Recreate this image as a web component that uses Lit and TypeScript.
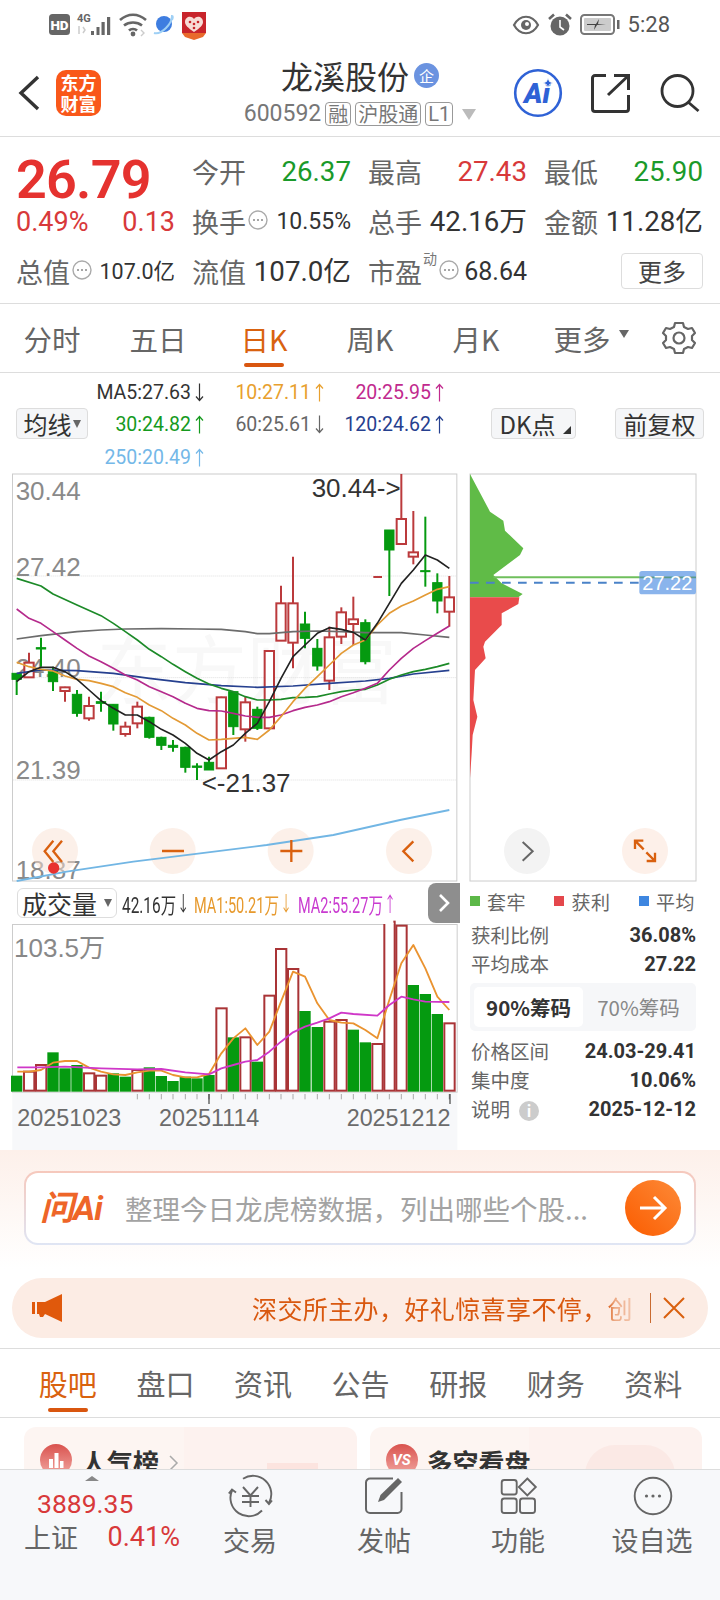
import { LitElement, html, css, svg } from "lit";
import { customElement } from "lit/decorators.js";

type P = [number, number];
const line = (p: P[]) => p.map((q) => q.join(",")).join(" ");
const XS = [50, 87, 123, 159, 195, 231, 267, 303, 340, 376, 412, 448, 484, 519, 556, 591, 627, 664, 700, 736, 772, 808, 843, 879, 915, 952, 988, 1024, 1060, 1096, 1132, 1168, 1204, 1240, 1276, 1312, 1348];
const RED = "#bb3a3c";
const GREEN = "#059a10";
// [wickTop, bodyTop, bodyBottom, wickBottom, up]
const CANDLES: [number, number, number, number, number][] = [
  [610, 610, 628, 675, 0], [548, 578, 622, 622, 1], [503, 533, 537, 590, 0], [590, 605, 635, 663, 0], [650, 652, 663, 695, 1],
  [660, 673, 730, 740, 0], [680, 708, 745, 752, 1], [665, 695, 700, 725, 0], [703, 703, 762, 782, 0], [755, 770, 792, 800, 1],
  [695, 710, 760, 775, 1], [740, 742, 802, 806, 0], [800, 802, 826, 840, 0], [810, 826, 832, 845, 0], [830, 832, 892, 908, 0],
  [880, 888, 892, 930, 0], [860, 877, 900, 900, 0], [680, 682, 895, 895, 1], [665, 665, 770, 795, 0], [680, 697, 778, 815, 1],
  [710, 718, 775, 780, 0], [543, 543, 775, 775, 1], [347, 400, 512, 512, 1], [260, 400, 518, 595, 1], [425, 462, 505, 535, 0],
  [507, 535, 588, 602, 0], [470, 502, 632, 660, 1], [412, 427, 500, 522, 1], [380, 448, 462, 525, 1], [448, 458, 575, 583, 0],
  [320, 320, 322, 322, 1], [180, 180, 240, 378, 0], [12, 147, 222, 222, 1], [123, 247, 260, 283, 1], [140, 302, 305, 350, 0],
  [310, 338, 393, 430, 0], [318, 382, 425, 470, 1],
];
const MA5: P[] = [[50,635],[87,605],[123,592],[159,592],[195,605],[231,628],[267,660],[303,692],[340,715],[376,735],[412,735],[448,755],[484,778],[519,795],[556,820],[591,850],[627,870],[664,845],[700,825],[736,790],[772,760],[808,695],[843,625],[879,560],[915,525],[952,490],[988,473],[1024,478],[1060,487],[1096,510],[1132,460],[1168,400],[1204,340],[1240,300],[1276,255],[1312,270],[1348,295]];
const MA10: P[] = [[50,577],[87,590],[123,598],[159,603],[195,618],[231,628],[267,632],[303,640],[340,650],[376,668],[412,682],[448,705],[484,722],[519,745],[556,765],[591,790],[627,810],[664,808],[700,805],[736,802],[772,808],[808,780],[843,740],[879,695],[915,655],[952,620],[988,585],[1024,550],[1060,525],[1096,510],[1132,465],[1168,430],[1204,408],[1240,393],[1276,375],[1312,358],[1348,350]];
const MA20: P[] = [[50,417],[87,445],[123,460],[159,485],[195,510],[231,535],[267,558],[303,575],[340,595],[376,615],[412,630],[448,650],[484,665],[519,680],[556,700],[591,715],[627,722],[664,723],[700,730],[736,738],[772,742],[808,742],[843,735],[879,722],[915,712],[952,705],[988,695],[1024,680],[1060,668],[1096,655],[1132,640],[1168,600],[1204,565],[1240,535],[1276,512],[1312,490],[1348,468]];
const MA30: P[] = [[50,325],[123,348],[159,372],[231,405],[303,437],[340,460],[376,485],[412,510],[448,538],[484,560],[519,583],[556,605],[591,625],[627,642],[664,655],[700,665],[736,680],[772,690],[808,690],[843,688],[879,683],[915,682],[952,680],[988,672],[1024,665],[1060,660],[1096,658],[1132,645],[1168,628],[1204,615],[1240,605],[1276,598],[1312,590],[1348,580]];
const MA60: P[] = [[50,507],[123,497],[231,485],[303,480],[376,477],[484,476],[591,477],[664,478],[736,485],[772,491],[808,491],[879,485],[952,483],[1024,485],[1096,488],[1204,488],[1276,495],[1348,502]];
const MA120: P[] = [[50,610],[123,600],[231,602],[340,610],[448,625],[556,638],[664,647],[772,652],[879,648],[988,640],[1096,633],[1168,625],[1240,612],[1348,601]];
const MA250: P[] = [[50,1233],[200,1205],[400,1175],[600,1150],[800,1125],[1000,1095],[1200,1050],[1348,1020]];
const VOL: [number, number][] = [[587,0],[575,1],[555,1],[517,0],[565,0],[555,0],[580,1],[587,1],[580,0],[590,0],[570,1],[562,0],[588,0],[603,0],[590,0],[595,0],[585,0],[385,1],[472,0],[472,1],[545,0],[347,1],[207,1],[267,1],[393,0],[441,0],[425,1],[420,1],[449,0],[487,0],[492,1],[125,1],[137,1],[315,0],[342,0],[402,0],[430,1]];
const V1: P[] = [[52,575],[87,575],[123,570],[159,548],[195,543],[231,543],[267,563],[303,575],[340,583],[376,585],[412,577],[448,572],[484,572],[519,585],[556,592],[591,592],[627,582],[664,520],[700,475],[736,445],[772,495],[808,455],[843,365],[879,275],[915,290],[952,370],[988,420],[1024,428],[1060,430],[1096,450],[1132,475],[1168,360],[1204,250],[1240,195],[1276,265],[1312,350],[1348,390]];
const V2: P[] = [[52,562],[123,562],[195,560],[303,565],[412,568],[484,567],[556,577],[627,583],[664,565],[700,555],[736,545],[772,540],[808,515],[843,485],[879,457],[915,440],[952,428],[988,415],[1024,398],[1060,402],[1132,407],[1168,375],[1204,350],[1240,358],[1276,365],[1348,366]];
const CHIP_G: P[] = [[30,12],[90,125],[130,152],[135,182],[190,235],[180,255],[100,315],[125,340],[188,372],[175,382],[30,382]];
const CHIP_R: P[] = [[30,382],[178,382],[175,402],[125,430],[125,465],[75,515],[70,530],[77,565],[45,600],[40,690],[52,740],[38,795],[35,850],[30,925]];

const dots = html`<svg class="dots" viewBox="0 0 20 20"><circle cx="10" cy="10" r="9" fill="none" stroke="#aaa" stroke-width="1.4"/><circle cx="6" cy="10" r="1" fill="#888"/><circle cx="10" cy="10" r="1" fill="#888"/><circle cx="14" cy="10" r="1" fill="#888"/></svg>`;
const up = html`<svg class="arr" viewBox="0 0 9 20"><path d="M4.5 19V2M1 6l3.5-4L8 6" fill="none" stroke="currentColor" stroke-width="1.2"/></svg>`;
const down = html`<svg class="arr" viewBox="0 0 9 20"><path d="M4.5 1v17M1 14l3.5 4L8 14" fill="none" stroke="currentColor" stroke-width="1.2"/></svg>`;

@customElement("app-root")
export class AppRoot extends LitElement {
  static styles = css`
    :host { display: block; width: 720px; height: 1600px; overflow: hidden; background: #fff; font-family: Roboto, "Noto Sans CJK SC", sans-serif; color: #333; }
    * { box-sizing: border-box; }
    svg { display: block; overflow: visible; }
    .cjk { font-family: "Noto Sans CJK SC", sans-serif; }
    .status { height: 50px; display: flex; justify-content: space-between; align-items: flex-start; padding: 10px 50px 0 49px; }
    .status-right { display: flex; align-items: center; height: 29px; }
    .st-eye { margin-right: 9px; }
    .st-alarm { margin-right: 8px; }
    .st-bat { margin-right: 9px; }
    .time { font-size: 22px; color: #555; }
    .head { height: 87px; display: grid; grid-template-columns: 1fr auto 1fr; align-items: center; border-bottom: 1px solid #ddd; }
    .head-l { display: flex; align-items: center; padding-left: 18px; gap: 16px; }
    .logo { width: 45px; height: 46px; border-radius: 10px; background: #f9581a; color: #fff; font: 700 18px/21px "Noto Sans CJK SC", sans-serif; display: flex; align-items: center; justify-content: center; text-align: center; }
    .head-c { display: flex; flex-direction: column; align-items: center; padding-top: 6px; height: 100%; }
    .title { display: flex; align-items: center; gap: 5px; font-size: 32px; line-height: 38px; color: #333; }
    .qi { width: 25px; height: 25px; border-radius: 50%; background: #6b93e0; color: #fff; font-size: 15px; line-height: 25px; text-align: center; }
    .sub { display: flex; align-items: center; gap: 3px; margin-top: 8px; color: #777; font-size: 23px; line-height: 24px; }
    .tag { border: 1px solid #999; border-radius: 4px; font-size: 20px; line-height: 22px; padding: 0 2px; color: #777; margin-left: 1px; }
    .caret { width: 0; height: 0; border: 7.5px solid transparent; border-top: 11px solid #bbb; border-bottom: 0; margin-left: 6px; }
    .head-r { display: flex; justify-content: flex-end; align-items: center; padding-right: 19px; gap: 29px; }
    .search { margin-left: 2px; }
    .quote { height: 167px; border-bottom: 1px solid #ddd; padding: 10px 0 0 16px; display: grid; grid-template-columns: 176px 176px 176px 175px; grid-template-rows: 50px 50px 50px; }
    .price { font-size: 54px; font-weight: 600; color: #e5322f; line-height: 50px; margin-top: 8px; letter-spacing: -.8px; }
    .cell { width: 159px; display: flex; align-items: center; line-height: 50px; white-space: nowrap; font-size: 27.7px; }
    .lab { font-size: 27px; color: #666; }
    .push { margin-left: auto; }
    .red { color: #d8393a; }
    .grn { color: #1a9a2a; }
    .sm { font-size: 23px; }
    .xs { font-size: 21.5px; }
    .md { font-size: 25px; }
    .cell .small { font-size: 27px; }
    .dots { width: 20px; height: 20px; margin-left: 2px; flex: none; margin-top: -4px; }
    .sup { font-size: 14px; color: #777; align-self: flex-start; line-height: 16px; margin-top: 3px; margin-left: 1px; }
    .more { width: 82px; height: 36px; border: 1px solid #ddd; border-radius: 4px; font-size: 24px; line-height: 34px; text-align: center; color: #444; margin-left: 77px; align-self: center; margin-top: -3px; }
    .tabs { height: 69px; display: grid; grid-template-columns: repeat(6, 106px) 1fr; align-items: center; border-bottom: 1px solid #ddd; margin-left: -1px; }
    .tab { position: relative; height: 100%; display: flex; align-items: center; justify-content: center; font-size: 28.5px; color: #666; }
    .tab.on { color: #d9620f; }
    .tab.on::after { content: ""; position: absolute; width: 40px; height: 4px; border-radius: 2px; background: #d9560f; bottom: 5px; left: 33px; }
    .tab-caret { position: absolute; left: 90px; top: 26px; width: 0; height: 0; border: 5px solid transparent; border-top: 8px solid #666; border-bottom: 0; }
    .gear { margin-left: 27px; }
    .ma { height: 97px; padding-top: 3px; display: grid; grid-template-columns: 83px 121px 120px 120px 1fr; grid-template-rows: 32px 33px 32px; font-size: 19.5px; }
    .mv { display: flex; justify-content: flex-end; align-items: center; white-space: nowrap; }
    .m1 { grid-area: 1 / 2; color: #333; }
    .m2 { grid-area: 1 / 3; color: #e8a02e; }
    .m3 { grid-area: 1 / 4; color: #c12a8e; }
    .m4 { grid-area: 2 / 2; color: #159a1e; }
    .m5 { grid-area: 2 / 3; color: #666; }
    .m6 { grid-area: 2 / 4; color: #26408f; }
    .m7 { grid-area: 3 / 2; color: #74b8e8; }
    .arr { width: 9px; height: 21px; margin-left: 4px; flex: none; }
    .btn { background: #f5f6f8; border: 1px solid #ddd; border-radius: 4px; color: #333; font-size: 24px; height: 31px; line-height: 29px; display: flex; align-items: center; justify-content: center; position: relative; }
    .b1 { grid-column: 1 / 3; grid-row: 2; width: 72px; margin-left: 16px; }
    .b-tri { width: 0; height: 0; border: 4.5px solid transparent; border-top: 8px solid #666; border-bottom: 0; margin-left: 1px; }
    .tools { grid-column: 5; grid-row: 2; display: flex; justify-content: flex-end; gap: 39px; padding-right: 16px; }
    .b2 { width: 85px; padding-right: 12px; }
    .b2::after { content: ""; position: absolute; right: 4px; bottom: 4px; border: 4px solid transparent; border-right-color: #333; border-bottom-color: #333; }
    .b3 { width: 89px; }
    .charts { display: flex; height: 412px; }
    .lower { display: flex; height: 268px; }
    .lower-l { width: 460px; }
    .vh { height: 42px; display: flex; align-items: center; padding-left: 17px; position: relative; }
    .b4 { width: 100px; height: 30px; font-size: 25px; border-radius: 6px; color: #333; background: #fff; flex: none; }
    .b4 .b-tri { margin-left: 7px; }
    .vi { display: flex; align-items: center; font-size: 22px; transform: scaleX(.66); transform-origin: left center; white-space: nowrap; flex: none; margin-left: 5px; }
    .vi.a { width: 67px; color: #333; transform: scaleX(.7); }
    .vi.b { width: 99px; color: #e79a2e; }
    .vi.c { width: 100px; color: #c93bd0; }
    .vi .arr { margin-left: 4px; width: 13px; }
    .fold { position: absolute; left: 428px; top: 1px; width: 32px; height: 40px; background: #8e8e8e; border-radius: 8px 0 0 8px; display: flex; align-items: center; justify-content: center; }
    .lower-r { width: 260px; padding: 7px 24px 0 10px; font-size: 19.5px; color: #666; }
    .legend { display: flex; justify-content: space-between; align-items: center; height: 24px; padding-right: 1px; font-size: 19px; }
    .lg { display: flex; align-items: center; gap: 7px; letter-spacing: .5px; }
    .sq { width: 10px; height: 10px; }
    .sq1 { background: #5cb848; }
    .sq2 { background: #e4474c; }
    .sq3 { background: #3e86e0; }
    .row { display: flex; justify-content: space-between; align-items: center; height: 29px; padding-left: 1px; }
    .row b { font-size: 20px; font-weight: 700; color: #333; font-family: Roboto, sans-serif; }
    .r1 { margin-top: 7px; }
    .seg { margin: 5px 0; height: 48px; background: #f6f7f9; border-radius: 5px; padding: 4px; display: flex; align-items: center; font-size: 20.5px; color: #888; }
    .seg span { flex: 1; text-align: center; line-height: 40px; padding-left: 2px; }
    .seg .act { flex: none; width: 109px; background: #fff; border-radius: 5px; font-weight: 700; color: #333; padding: 0; }
    .info { display: inline-block; width: 20px; height: 20px; border-radius: 50%; background: #ccc; color: #fff; text-align: center; line-height: 20px; font-size: 15px; font-weight: 700; font-style: normal; margin-left: 9px; }
    .ai { height: 199px; background: linear-gradient(#fdf0ea, #fff 60%); padding-top: 21px; border-bottom: 1px solid #ddd; }
    .ask { margin: 0 24px; height: 74px; border: 2px solid transparent; border-radius: 14px; background: linear-gradient(#fff, #fff) padding-box, linear-gradient(#f6c8bc, #dfe5f4) border-box; display: flex; align-items: center; padding: 0 13px 0 14px; }
    .ask-logo { font: italic 700 34px/36px Roboto, "Noto Sans CJK SC", sans-serif; color: #ee6528; width: 85px; flex: none; white-space: nowrap; letter-spacing: -1px; }
    .ask-t { flex: 1; font-size: 27.5px; color: #a3a3a3; white-space: nowrap; overflow: hidden; }
    .go { width: 56px; height: 56px; border-radius: 50%; background: linear-gradient(45deg, #fb5c00, #fd8a38); display: flex; align-items: center; justify-content: center; flex: none; }
    .notice { margin: 33px 12px 0; height: 60px; border-radius: 30px; background: #fcece4; display: flex; align-items: center; padding-left: 20px; color: #d9580f; }
    .notice-t { margin-left: 188px; width: 386px; font-size: 25px; letter-spacing: .4px; white-space: nowrap; overflow: hidden; -webkit-mask-image: linear-gradient(90deg, #000 92%, rgba(0,0,0,.45) 94%, rgba(0,0,0,.2)); mask-image: linear-gradient(90deg, #000 92%, rgba(0,0,0,.45) 94%, rgba(0,0,0,.2)); }
    .sep { width: 1px; height: 30px; background: #c96a30; margin: 0 12px; }
    .btabs { height: 69px; display: grid; grid-template-columns: repeat(7, 97.6px); padding-left: 19px; border-bottom: 1px solid #ddd; }
    .btab { position: relative; display: flex; align-items: center; justify-content: center; font-size: 29px; color: #666; }
    .btab.on { color: #d9620f; }
    .btab.on::after { content: ""; position: absolute; width: 40px; height: 4px; border-radius: 2px; background: #d9560f; bottom: 5px; left: 29px; }
    .cards { height: 51px; overflow: hidden; display: flex; gap: 13px; padding: 9px 18px 0 24px; }
    .card { position: relative; flex: 1; height: 120px; border-radius: 12px; background: linear-gradient(90deg, #fdf5f2 0 48%, #fdf2ef 48%); display: flex; align-items: flex-start; padding: 16px 0 0 16px; font-size: 26px; font-weight: 700; color: #333; overflow: hidden; }
    .deco { position: absolute; left: 243px; top: 36px; width: 51px; height: 40px; background: #fce4df; }
    .deco2 { left: 215px; top: 18px; width: 90px; height: 60px; background: #fbe9e5; border-radius: 30px 30px 0 0; }
    .ci { width: 32px; height: 32px; border-radius: 50%; background: linear-gradient(#d9524e, #f2a9a3); margin: 1px 9px 0 0; flex: none; position: relative; z-index: 1; }
    .vs { color: #fff; font: italic 700 15px/32px Roboto, sans-serif; text-align: center; }
    .nm { position: relative; z-index: 1; }
    .chev { margin: 12px 0 0 10px; position: relative; z-index: 1; }
    .foot { height: 131px; background: #f7f8fa; border-top: 1px solid #ddd; display: grid; grid-template-columns: 183px repeat(4, 134px); position: relative; }
    .fl { padding: 6px 0 0 24px; }
    .ftri { width: 0; height: 0; border: 7px solid transparent; border-bottom: 5px solid #888; border-top: 0; margin: 0 0 0 61px; }
    .fnum { font-size: 26.5px; color: #d8393a; line-height: 34px; margin: 6px 0 0 13px; }
    .frow { display: flex; font-size: 27px; color: #666; line-height: 32px; justify-content: space-between; width: 156px; }
    .frow span + span { color: #d8393a; }
    .fi { display: flex; flex-direction: column; align-items: center; padding-top: 7px; color: #666; font-size: 27px; }
    .fi svg { height: 40px; width: 44px; }
    .fi div { margin-top: 6px; line-height: 34px; }
  `;

  private candles() {
    return CANDLES.map(([wt, bt, bb, wb, u], i) => {
      const x = XS[i];
      const c = u ? RED : GREEN;
      if (i === 30) return svg`<rect x="1120" y="318" width="26" height="6" fill="${RED}"/>`;
      return svg`<line x1="${x}" x2="${x}" y1="${wt}" y2="${wb}" stroke="${c}" stroke-width="6"/>
        <rect x="${x - 14}" y="${bt}" width="28" height="${bb - bt}" fill="${u ? "#fff" : c}" stroke="${c}" stroke-width="${u ? 6 : 3}"/>`;
    });
  }

  private poly(p: P[], c: string, w = 5) {
    return svg`<polyline points="${line(p)}" fill="none" stroke="${c}" stroke-width="${w}" stroke-linejoin="round"/>`;
  }

  private circleBtn(x: number, fill: string) {
    return svg`<circle cx="${x}" cy="1143" r="69" fill="${fill}"/>`;
  }

  private kChart() {
    const axis = [["30.44", 91], ["27.42", 318], ["24.40", 622], ["21.39", 928], ["18.87", 1226]] as [string, number][];
    return html`<svg width="460" height="412" viewBox="0 0 1380 1236">
      <rect x="37.5" y="12" width="1333" height="1221" fill="#fff" stroke="#ccc" stroke-width="3"/>
      <text x="290" y="685" font-size="225" fill="#f8f8f8" font-family="Noto Sans CJK SC">东方财富</text>
      ${[318, 623, 930].map((y) => svg`<line x1="40" x2="1368" y1="${y}" y2="${y}" stroke="#ddd" stroke-width="3" stroke-dasharray="3 3"/>`)}
      ${axis.map(([t, y]) => svg`<text x="47" y="${y}" font-size="78" fill="#8a8a8a" font-family="Liberation Sans">${t}</text>`)}
      ${this.candles()}
      ${this.poly(MA60, "#6c6c6c")}${this.poly(MA120, "#26408f")}${this.poly(MA30, "#1c8a28")}${this.poly(MA20, "#b52a8c")}${this.poly(MA10, "#e39a35")}${this.poly(MA5, "#222")}
      ${this.circleBtn(165, "rgba(250,225,212,.5)")}${this.circleBtn(518, "rgba(250,225,212,.5)")}${this.circleBtn(872, "rgba(250,225,212,.5)")}${this.circleBtn(1227, "rgba(250,225,212,.5)")}
      ${this.poly(MA250, "#72b6e4", 5.5)}
      <text x="935" y="82" font-size="78" fill="#333" font-family="Liberation Sans">30.44-&gt;</text>
      <text x="605" y="966" font-size="78" fill="#333" font-family="Liberation Sans">&lt;-21.37</text>
      <g fill="none" stroke="#d9600f" stroke-width="7">
        <path d="M160 1112l-26 32 26 32M186 1112l-26 32 26 32"/>
        <path d="M486 1143h66M841 1143h66M874 1110v66"/>
        <path d="M1240 1114l-30 30 30 30"/>
      </g>
      <circle cx="161" cy="1194" r="17" fill="#e8322f"/>
    </svg>`;
  }

  private chipChart() {
    return html`<svg width="260" height="412" viewBox="0 0 780 1236">
      <rect x="30" y="12" width="678" height="1221" fill="#fff" stroke="#ccc" stroke-width="3"/>
      <polygon points="${line(CHIP_G)}" fill="#60bb47"/>
      <polygon points="${line(CHIP_R)}" fill="#e94b4b"/>
      <line x1="100" x2="708" y1="322" y2="322" stroke="#6fbf5c" stroke-width="6"/>
      <line x1="30" x2="540" y1="338" y2="338" stroke="#4a82c8" stroke-width="6" stroke-dasharray="26 22"/>
      <rect x="538" y="303" width="170" height="70" rx="8" fill="#8ab4ec"/>
      <line x1="538" x2="708" y1="322" y2="322" stroke="#5a9a8c" stroke-width="5"/>
      <text x="622" y="359" text-anchor="middle" font-size="60" fill="#fff" font-family="Liberation Sans">27.22</text>
      <circle cx="201" cy="1143" r="69" fill="#f3f3f3"/>
      <path d="M188 1116l30 28-30 28" fill="none" stroke="#666" stroke-width="6"/>
      <circle cx="555" cy="1143" r="69" fill="#fdf0e9"/>
      <path d="M525 1112l26 26M525 1137v-25h25M585 1173l-26-26M585 1148v25h-25" fill="none" stroke="#d9600f" stroke-width="7"/>
    </svg>`;
  }

  private volChart() {
    const ticks = XS.slice(10);
    return html`<svg width="460" height="226" viewBox="0 132 1380 678">
      <rect x="37" y="637" width="1335" height="173" fill="#f7f8fa"/>
      <rect x="37.5" y="133.5" width="1334" height="503" fill="#fff" stroke="#ccc" stroke-width="3"/>
      ${VOL.map(([t, u], i) => {
        const x = XS[i];
        return u
          ? svg`<rect x="${x - 15}" y="${t}" width="31" height="${632 - t}" fill="#fff" stroke="#a93436" stroke-width="6"/>`
          : svg`<rect x="${x - 17}" y="${t}" width="34" height="${635 - t}" fill="${GREEN}"/>`;
      })}
      <rect x="1140" y="120" width="40" height="12" fill="#fff"/>
      ${this.poly(V1, "#ea9330", 5.5)}${this.poly(V2, "#cf37c8", 5.5)}
      <text x="42" y="230" font-size="78" fill="#888" font-family="Liberation Sans, Noto Sans CJK SC">103.5万</text>
      ${ticks.map((x) => svg`<line x1="${x}" x2="${x}" y1="642" y2="658" stroke="${x === 627 || x === 1348 ? "#666" : "#aaa"}" stroke-width="3"/>`)}
      <line x1="627" x2="627" y1="642" y2="672" stroke="#555" stroke-width="4"/>
      <line x1="1350" x2="1350" y1="642" y2="672" stroke="#555" stroke-width="4"/>
      ${[["20251023", 52], ["20251114", 477], ["20251212", 1040]].map(([t, x]) => svg`<text x="${x}" y="738" font-size="70" fill="#6b6b6b" font-family="Liberation Sans">${t}</text>`)}
    </svg>`;
  }

  render() {
    return html`
      <div class="status">
        <svg width="160" height="32" viewBox="0 0 160 32">
          <rect x="0" y="4" width="21" height="21" rx="3.5" fill="#666"/>
          <text x="10.5" y="19.5" text-anchor="middle" font-size="13.5" font-weight="900" fill="#fff" font-family="Roboto">HD</text>
          <text x="28" y="12" font-size="11" fill="#666" font-weight="700" font-family="Roboto">4G</text>
          <g fill="#666"><rect x="42" y="21" width="3" height="4" /><rect x="47.5" y="17" width="3" height="8"/><rect x="52.5" y="12" width="3.2" height="13"/><rect x="58" y="7" width="3.2" height="18"/></g>
          <path d="M30 16v8M34 17l2 3-2 3" stroke="#ccc" stroke-width="1.5" fill="none"/>
          <g fill="none" stroke="#666" stroke-width="2.6"><path d="M71 10c8-7 18-7 26 0"/><path d="M75 15.5c5-4 13-4 18 0"/><path d="M80 20.5c2-2 6-2 8 0"/></g>
          <circle cx="84" cy="24" r="2.4" fill="#666"/>
          <path d="M92 20l3 3-3 3" stroke="#ccc" stroke-width="1.4" fill="none"/>
          <circle cx="115" cy="14" r="8" fill="#3e7de0"/>
          <path d="M105 23c3 1 8-1 12-5s6-8 6-12c1 0 1 1 0 4" fill="none" stroke="#9fd0f5" stroke-width="2"/>
          <rect x="133" y="2" width="24" height="21" fill="#c8242b"/>
          <path d="M133 23h24l-3 4-9 3-9-3z" fill="#e96a2c"/>
          <path d="M145 22c-6-4-9-7-9-10 0-5 6-7 9-3 3-4 9-2 9 3 0 3-3 6-9 10z" fill="#f7dcd6"/>
          <g fill="#c8242b"><circle cx="141" cy="12" r="1.3"/><circle cx="145" cy="14" r="1.3"/><circle cx="149" cy="12" r="1.3"/><circle cx="145" cy="18" r="1.3"/></g>
        </svg>
        <div class="status-right">
          <svg class="st-eye" width="26" height="18" viewBox="0 0 26 18"><path d="M1 9c6-11 18-11 24 0-6 11-18 11-24 0z" fill="none" stroke="#666" stroke-width="2.2"/><circle cx="13" cy="9" r="5" fill="#666"/><circle cx="14" cy="8" r="2" fill="#fff"/></svg>
          <svg class="st-alarm" width="24" height="23" viewBox="0 0 24 23"><circle cx="12" cy="13" r="9.5" fill="#666"/><path d="M12 7v7l4 3" stroke="#fff" stroke-width="1.6" fill="none"/><path d="M1 6l5-4.5M23 6l-5-4.5" stroke="#666" stroke-width="2.6"/></svg>
          <svg class="st-bat" width="39" height="21" viewBox="0 0 39 21"><rect x="1" y="1" width="33" height="19" rx="3.5" fill="#fff" stroke="#777" stroke-width="2"/><rect x="4" y="4" width="27" height="13" rx="1" fill="#ccc"/><rect x="37" y="6" width="2.5" height="9" fill="#666"/><path d="M7 10h9l3-5-1 5h8l-9 1-3 5 1-5H7z" fill="#444"/></svg>
          <span class="time">5:28</span>
        </div>
      </div>

      <div class="head">
        <div class="head-l">
          <svg width="22" height="36" viewBox="0 0 22 36"><path d="M20 2L3 18l17 16" fill="none" stroke="#333" stroke-width="3.4"/></svg>
          <div class="logo">东方<br />财富</div>
        </div>
        <div class="head-c">
          <div class="title cjk">龙溪股份<span class="qi">企</span></div>
          <div class="sub"><span>600592</span><span class="tag cjk">融</span><span class="tag cjk">沪股通</span><span class="tag">L1</span><span class="caret"></span></div>
        </div>
        <div class="head-r">
          <svg width="48" height="48" viewBox="0 0 48 48"><circle cx="24" cy="24" r="22.8" fill="#fff" stroke="#2f62d6" stroke-width="2.6"/><text x="23" y="33.5" text-anchor="middle" font-size="28" font-weight="900" font-style="italic" fill="#2f62d6" font-family="Roboto">Ai</text><path d="M34 9l1.5 3.5L39 14l-3.5 1.5L34 19l-1.5-3.5L29 14l3.5-1.5z" fill="#2f62d6" stroke="#fff" stroke-width=".8"/></svg>
          <svg width="39" height="39" viewBox="0 0 39 39"><path d="M15 1.5H4a2.500 2.500 0 0 0-2.500 2.500v31a2.500 2.500 0 0 0 2.500 2.500h31a2.500 2.500 0 0 0 2.500-2.500V21M17 21L37 2M23 1.500h14.500V16" fill="none" stroke="#333" stroke-width="3"/></svg>
          <svg class="search" width="40" height="40" viewBox="0 0 40 40"><circle cx="16.500" cy="18" r="15.500" fill="none" stroke="#333" stroke-width="2.800"/><path d="M27 29l10.500 9" stroke="#333" stroke-width="2.800"/></svg>
        </div>
      </div>

      <div class="quote">
        <div class="price">26.79</div>
        <div class="cell"><span class="lab cjk">今开</span><span class="push grn">26.37</span></div>
        <div class="cell"><span class="lab cjk">最高</span><span class="push red">27.43</span></div>
        <div class="cell"><span class="lab cjk">最低</span><span class="push grn">25.90</span></div>
        <div class="cell red"><span class="small">0.49%</span><span class="push small">0.13</span></div>
        <div class="cell"><span class="lab cjk">换手</span>${dots}<span class="push sm">10.55%</span></div>
        <div class="cell"><span class="lab cjk">总手</span><span class="push">42.16万</span></div>
        <div class="cell"><span class="lab cjk">金额</span><span class="push">11.28亿</span></div>
        <div class="cell"><span class="lab cjk">总值</span>${dots}<span class="push xs">107.0亿</span></div>
        <div class="cell"><span class="lab cjk">流值</span><span class="push">107.0亿</span></div>
        <div class="cell"><span class="lab cjk">市盈</span><span class="sup cjk">动</span>${dots}<span class="push md">68.64</span></div>
        <div class="more cjk">更多</div>
      </div>

      <div class="tabs cjk">
        <div class="tab">分时</div><div class="tab">五日</div><div class="tab on">日K</div><div class="tab">周K</div><div class="tab">月K</div>
        <div class="tab">更多<span class="tab-caret"></span></div>
        <svg class="gear" width="34" height="36" viewBox="0 0 34 36"><path d="M13 2h8l1 4 4 2 4-1 3 5-3 3v4l3 3-3 5-4-1-4 2-1 4h-8l-1-4-4-2-4 1-3-5 3-3v-4L1 12l3-5 4 1 4-2z" transform="translate(0 1)" fill="none" stroke="#666" stroke-width="2.200" stroke-linejoin="round"/><circle cx="17" cy="18" r="5.500" fill="none" stroke="#666" stroke-width="2.200"/></svg>
      </div>

      <div class="ma">
        <div class="mv m1">MA5:27.63${down}</div>
        <div class="mv m2">10:27.11${up}</div>
        <div class="mv m3">20:25.95${up}</div>
        <div class="mv m4">30:24.82${up}</div>
        <div class="mv m5">60:25.61${down}</div>
        <div class="mv m6">120:24.62${up}</div>
        <div class="mv m7">250:20.49${up}</div>
        <div class="btn b1 cjk">均线<span class="b-tri"></span></div>
        <div class="tools"><div class="btn b2 cjk">DK点</div><div class="btn b3 cjk">前复权</div></div>
      </div>

      <div class="charts">${this.kChart()}${this.chipChart()}</div>

      <div class="lower">
        <div class="lower-l">
          <div class="vh">
            <div class="btn b4 cjk">成交量<span class="b-tri"></span></div>
            <div class="vi a">42.16万${down}</div>
            <div class="vi b">MA1:50.21万${down}</div>
            <div class="vi c">MA2:55.27万${up}</div>
            <div class="fold"><svg width="14" height="20" viewBox="0 0 14 20"><path d="M3 2l8 8-8 8" fill="none" stroke="#fff" stroke-width="2.600"/></svg></div>
          </div>
          ${this.volChart()}
        </div>
        <div class="lower-r cjk">
          <div class="legend">
            <span class="lg"><i class="sq sq1"></i>套牢</span>
            <span class="lg"><i class="sq sq2"></i>获利</span>
            <span class="lg"><i class="sq sq3"></i>平均</span>
          </div>
          <div class="row r1"><span>获利比例</span><b>36.08%</b></div>
          <div class="row"><span>平均成本</span><b>27.22</b></div>
          <div class="seg"><span class="act">90%筹码</span><span>70%筹码</span></div>
          <div class="row"><span>价格区间</span><b>24.03-29.41</b></div>
          <div class="row"><span>集中度</span><b>10.06%</b></div>
          <div class="row"><span>说明<i class="info">i</i></span><b>2025-12-12</b></div>
        </div>
      </div>

      <div class="ai">
        <div class="ask">
          <div class="ask-logo">问Ai</div>
          <div class="ask-t cjk">整理今日龙虎榜数据，列出哪些个股...</div>
          <div class="go"><svg width="30" height="28" viewBox="0 0 30 28"><path d="M2 14h25M16 3l11 11-11 11" fill="none" stroke="#fff" stroke-width="3"/></svg></div>
        </div>
        <div class="notice">
          <svg width="32" height="30" viewBox="0 0 32 30"><rect x="0" y="9" width="3" height="12" fill="#e0590c"/><path d="M5 9h8L30 1v28L13 21l-2 3H8l-1-3H5z" fill="#e0590c"/></svg>
          <div class="notice-t cjk">深交所主办，好礼惊喜享不停，创</div>
          <div class="sep"></div>
          <svg width="22" height="22" viewBox="0 0 22 22"><path d="M1 1l20 20M21 1L1 21" stroke="#d9600f" stroke-width="2"/></svg>
        </div>
      </div>

      <div class="btabs cjk">
        <div class="btab on">股吧</div><div class="btab">盘口</div><div class="btab">资讯</div><div class="btab">公告</div><div class="btab">研报</div><div class="btab">财务</div><div class="btab">资料</div>
      </div>

      <div class="cards cjk">
        <div class="card">
          <i class="deco"></i>
          <span class="ci"><svg width="32" height="32" viewBox="0 0 32 32"><path d="M9 24V15h4v9zM14.500 24V9h4v15zM20 24V17h3.500v7z" fill="#fff"/></svg></span>
          <span class="nm">人气榜</span>
          <svg class="chev" width="10" height="16" viewBox="0 0 10 16"><path d="M1 1l7 7-7 7" fill="none" stroke="#aaa" stroke-width="1.500"/></svg>
        </div>
        <div class="card">
          <i class="deco deco2"></i>
          <span class="ci vs">VS</span>
          <span class="nm">多空看盘</span>
        </div>
      </div>

      <div class="foot">
        <div class="fl">
          <div class="ftri"></div>
          <div class="fnum">3889.35</div>
          <div class="frow"><span class="cjk">上证</span><span>0.41%</span></div>
        </div>
        <div class="fi cjk">
          <svg viewBox="0 0 44 40"><g fill="none" stroke="#666" stroke-width="1.900"><path d="M15 1.800A18.300 18.300 0 0 1 41 26M37.500 23l3.500 4 3-3.500M34 33.500A18.300 18.300 0 0 1 4 13.500M0.800 16.500l3.200-4 4 3"/><path d="M15 10l7.500 8.500L30 10M14 19h17M14 25h17M22.500 18.500V30"/></g></svg>
          <div>交易</div>
        </div>
        <div class="fi cjk">
          <svg viewBox="0 0 44 40"><path d="M31 1.500H8a4 4 0 0 0-4 4V32a4 4 0 0 0 4 4h27.500a4 4 0 0 0 4-4V15" fill="none" stroke="#666" stroke-width="2"/><path d="M16 25l2.500-7L36 1l4 4-18 18z" fill="#666"/></svg>
          <div>发帖</div>
        </div>
        <div class="fi cjk">
          <svg viewBox="0 0 44 40"><g fill="none" stroke="#666" stroke-width="1.900"><rect x="5.700" y="3" width="15" height="14.500" rx="2.500"/><path d="M31.300 1.500l8.500 8.500-8.500 8.500-8.500-8.500z"/><rect x="5.700" y="21.500" width="15" height="14.500" rx="2.500"/><rect x="24" y="21.500" width="15" height="14.500" rx="2.500"/></g></svg>
          <div>功能</div>
        </div>
        <div class="fi cjk">
          <svg viewBox="0 0 44 40"><circle cx="23" cy="19" r="18.300" fill="none" stroke="#666" stroke-width="1.900"/><circle cx="16.500" cy="19" r="1.600" fill="#666"/><circle cx="23" cy="19" r="1.600" fill="#666"/><circle cx="29.500" cy="19" r="1.600" fill="#666"/></svg>
          <div>设自选</div>
        </div>
      </div>
    `;
  }
}
